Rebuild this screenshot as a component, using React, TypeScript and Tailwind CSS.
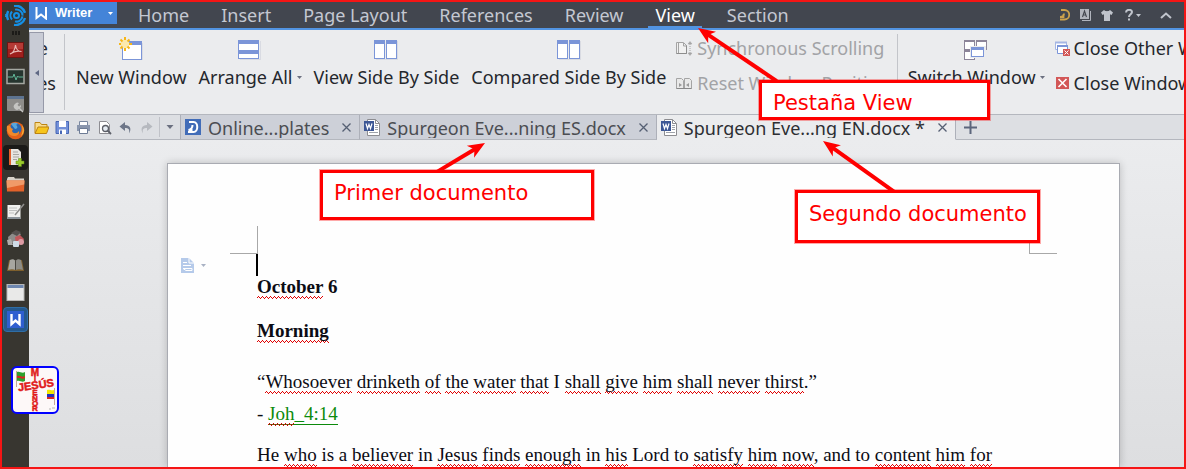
import type { ReactNode } from "react";

const squiggle =
  "pb-[2px] bg-no-repeat bg-[repeating-linear-gradient(90deg,transparent_0_1px,#e00000_1px_2px,transparent_2px_4px),repeating-linear-gradient(90deg,#e00000_0_1px,transparent_1px_2px),repeating-linear-gradient(90deg,transparent_0_3px,#e00000_3px_4px)] bg-[length:100%_1px] bg-[position:0_calc(100%_-_2px),0_calc(100%_-_1px),0_100%]";

function Spell({ children }: { children: ReactNode }) {
  return <span className={squiggle}>{children}</span>;
}

function Checked({ text }: { text: string }) {
  // Words wrapped in [brackets] are flagged by the spelling checker.
  return (
    <>
      {text.split(/(\[[^\]]+\])/).map((part, i) =>
        part.startsWith("[") ? <Spell key={i}>{part.slice(1, -1)}</Spell> : part,
      )}
    </>
  );
}

function Caret({ className }: { className: string }) {
  return (
    <svg viewBox="0 0 7 4" className={className} fill="currentColor">
      <path d="M0 0h7L3.5 4z" />
    </svg>
  );
}

/* ---------- Launcher ---------- */

const launcher: { name: string; tile?: string; icon: ReactNode }[] = [
  {
    name: "PDF reader",
    icon: (
      <>
        <rect x="1.5" y="2.5" width="16" height="15" fill="#9e1f1d" stroke="#6c1513" />
        <rect x="2" y="3" width="15" height="6" fill="#b53a35" />
        <path d="M4 14c3-1 5-5 5.500-9 .5 4 3 6.500 6 6.500-4-1-8 0-11.500 2.500z" fill="none" stroke="#e8b9b5" strokeWidth="1.100" />
      </>
    ),
  },
  {
    name: "System monitor",
    icon: (
      <>
        <rect x="1" y="2.500" width="17" height="14" fill="#26352f" stroke="#a5a8a2" strokeWidth="1.500" />
        <path d="M2 10h5l1-3 2 6 1.500-4 1 1H17" fill="none" stroke="#5fb597" />
      </>
    ),
  },
  {
    name: "System tools",
    icon: (
      <>
        <rect x="1" y="2" width="17" height="15" rx="1" fill="#8d8c89" />
        <rect x="1" y="2" width="17" height="3" fill="#5d7390" />
        <path d="M9 10a3 3 0 0 1 4-1l-1.500 2 1.500 1.500L15 11a3 3 0 0 1-1 3l3.500 3.500-1 1L13 15a3 3 0 0 1-4-5z" fill="#c5c5c2" />
      </>
    ),
  },
  {
    name: "Firefox",
    icon: (
      <>
        <circle cx="9.500" cy="9.500" r="8.800" fill="#e2611a" />
        <circle cx="9.500" cy="8" r="6" fill="#2b67b0" />
        <path d="M5 3c3-2 6-1 7 0-2 0-2 1-1 2s0 3-2 3z" fill="#58a6dc" />
        <path d="M1 5c2-1 4 0 4 2l2 1-1 2c1 3 5 3 7 0 1 3-2 5-5 5-5 0-8-5-7-10z" fill="#f0892a" />
        <path d="M16 4c2 3 3 8-1 11 2-4 2-7 1-11z" fill="#f8c53a" />
      </>
    ),
  },
  {
    name: "New document",
    tile: "bg-[#1b1a18] rounded-sm",
    icon: (
      <>
        <path d="M3 1h9l3 3v13H3z" fill="#e8e6e2" />
        <path d="M3 1h2v16H3z" fill="#e0622d" />
        <path d="M7 4h5M7 6.500h6M7 9h6M7 11.500h4" stroke="#a9a7a3" />
        <path d="M12.500 10.500h3v2.500H18v3h-2.500v2.500h-3V16H10v-3h2.500z" fill="#9ccb2c" stroke="#5e8a12" strokeWidth=".5" />
      </>
    ),
  },
  {
    name: "Files",
    icon: (
      <>
        <path d="M1 4l1-2h6l1 1.500h9V10H1z" fill="#d8d2c8" />
        <path d="M.5 5.500h18L18 16.500H1z" fill="#e2622a" />
        <path d="M.5 5.500h18l-.3 4L1 13z" fill="#f09a68" />
      </>
    ),
  },
  {
    name: "Text editor",
    icon: (
      <>
        <rect x="1.500" y="3" width="13" height="14" fill="#f0f0ee" />
        <path d="M3 6h8M3 8.500h8M3 11h5" stroke="#bfc0bf" />
        <rect x="1.500" y="15" width="13" height="2" fill="#8a9298" />
        <path d="M18 2l-9 11" stroke="#8e8e8c" strokeWidth="1.500" />
      </>
    ),
  },
  {
    name: "Packages",
    icon: (
      <>
        <path d="M2 8l7-6 6 3-5 7-7 4z" fill="#8e8c8b" />
        <path d="M5 4l5-3 5 2-4 4z" fill="#54504f" />
        <path d="M9 8l5-2 4 4-2 5-6 1z" fill="#c2575b" />
        <circle cx="15" cy="13" r="3" fill="#dd9ba4" />
        <rect x="7" y="12" width="6" height="6" rx="1" fill="#cfdbe6" />
        <path d="M1 11l4-1 2 6-5 0z" fill="#adacaa" />
      </>
    ),
  },
  {
    name: "Dictionary",
    icon: (
      <>
        <path d="M1 15L3 4l6 1 1 0 6-1 2 11-8 0z" fill="#7e5f2c" />
        <path d="M2 14L4 4c2-1 4-1 5.500 1v9c-2-1-5-1-7.500 0z" fill="#a7a6a0" />
        <path d="M17 14L15 4c-2-1-4-1-5.500 1v9c2-1 5-1 7.500 0z" fill="#8d8c86" />
        <path d="M9.500 5v9" stroke="#4a4842" />
      </>
    ),
  },
  {
    name: "Window",
    icon: (
      <>
        <rect x="1" y="1.500" width="17" height="16" fill="#e9e9e8" stroke="#b7b7b5" />
        <rect x="1.500" y="2" width="16" height="3" fill="#6e87b0" />
      </>
    ),
  },
  {
    name: "Writer",
    tile: "bg-[#25588c] border border-[#2f6ea6] rounded-sm",
    icon: (
      <>
        <rect x="1" y="1" width="17" height="17" fill="#2f5fd0" />
        <path d="M5.500 4v10l4-3.500 4 3.500V4" fill="none" stroke="#fff" strokeWidth="2.400" />
      </>
    ),
  },
];

function Launcher() {
  return (
    <aside className="flex w-[27px] shrink-0 flex-col items-center bg-[#383630]">
      <button aria-label="Dash" className="flex h-[27px] items-center">
        <svg viewBox="0 0 21 21" className="size-[21px]" fill="none" stroke="#1590e6" strokeWidth="2">
          <circle cx="11.500" cy="10.500" r="2.500" />
          <path d="M7 6.500a6 6 0 0 0 0 8M10 4.600a6 6 0 0 1 7.500 6M10 16.400a6 6 0 0 0 7.500-5" />
          <path d="M9 .8a10 10 0 0 1 11 7M9 20a10 10 0 0 0 11-7M3.200 6a10 10 0 0 0 0 9" strokeWidth="2.400" />
          <circle cx="1" cy="10.500" r=".6" />
        </svg>
      </button>
      <div className="flex h-[7px] items-center gap-px">
        <i className="h-1 w-[2px] bg-[#1c1b18]" />
        <i className="h-1 w-[2px] bg-[#1c1b18]" />
        <i className="h-1 w-[2px] bg-[#1c1b18]" />
      </div>
      {launcher.map((app) => (
        <button key={app.name} aria-label={app.name} className="flex h-[27px] w-full items-center justify-center">
          <span className={`flex size-[25px] items-center justify-center ${app.tile ?? ""}`}>
            <svg viewBox="0 0 19 19" className="size-[19px] shrink-0">{app.icon}</svg>
          </span>
        </button>
      ))}
    </aside>
  );
}

/* ---------- Menu bar ---------- */

const menus = ["Home", "Insert", "Page Layout", "References", "Review", "View", "Section"];

function MenuBar() {
  return (
    <header className="flex h-7 shrink-0 items-start border-b-2 border-[#5294e2] bg-[#42464f]">
      <button className="flex h-[22px] w-[88px] shrink-0 items-center bg-[#4484d8] pl-[6px] font-['Liberation_Sans'] text-[13px] font-bold text-white">
        <svg viewBox="0 0 13 13" className="size-[13px]" fill="none" stroke="#fff" strokeWidth="2">
          <path d="M1.500 0v11L6 7.500 11 11.500V0" />
        </svg>
        <span className="ml-[7px] flex-1 text-left">Writer</span>
        <Caret className="mr-[4px] h-[3px] w-[5px]" />
      </button>
      <nav className="ml-[14px] flex gap-[18px]">
        {menus.map((m) => (
          <button
            key={m}
            className={`h-[26px] border-y-2 border-t-transparent px-[7px] text-[18px] leading-[22px] whitespace-nowrap ${
              m === "View" ? "border-b-[#5294e2] text-white" : "border-b-transparent text-[#c4c8d2]"
            }`}
          >
            {m}
          </button>
        ))}
      </nav>
      <div className="ml-auto flex h-[26px] items-center pr-3 text-[#c0c4cc]">
        <button aria-label="Docer" className="mr-[10px]">
          <svg viewBox="0 0 11 12" className="h-3 w-[11px]" fill="none" stroke="#cda24c" strokeWidth="1.800">
            <path d="M2 1h3.500a4.500 4.500 0 0 1 0 9.500H1M5 4.500c0 2-1 3.500-4 3.500h3.500V5" />
          </svg>
        </button>
        <button aria-label="Fonts" className="mr-[10px]">
          <svg viewBox="0 0 11 12" className="h-3 w-[11px]">
            <path d="M0 0h9v10H0z" fill="#b0b4bd" />
            <path d="M10.500 2v9.500H2" fill="none" stroke="#b0b4bd" />
            <path d="M2.500 8l2-6 2 6M3 6h3" fill="none" stroke="#42464f" strokeWidth="1.100" />
          </svg>
        </button>
        <button aria-label="Skins" className="mr-3">
          <svg viewBox="0 0 12 11" className="h-[11px] w-3" fill="currentColor">
            <path d="M3 0c1.500 1.600 4.500 1.600 6 0l3 2.500-1.500 2.500-1.500-.8V11H3V4.200L1.500 5 0 2.500z" />
          </svg>
        </button>
        <button aria-label="Help" className="mr-[19px] flex items-center gap-[3px]">
          <svg viewBox="0 0 8 12" className="h-3 w-2" fill="none" stroke="currentColor" strokeWidth="2">
            <path d="M1 3.500C1 0 7 0 7 3c0 2-3 2.500-3 5M4 9.500v2" />
          </svg>
          <Caret className="h-[3px] w-[5px]" />
        </button>
        <button aria-label="Collapse ribbon">
          <svg viewBox="0 0 12 7" className="h-[7px] w-3" fill="none" stroke="currentColor" strokeWidth="2">
            <path d="M1 6l5-4.500L11 6" />
          </svg>
        </button>
      </div>
    </header>
  );
}

/* ---------- Ribbon ---------- */

const blue = "#7b95d8";

function SideBySideIcon() {
  return (
    <svg viewBox="0 0 24 24" className="size-6" shapeRendering="crispEdges">
      <path d="M2 23h22V4h-1v18H2z" fill="#d9dbe2" />
      <path d="M.5 3.500h10v18H.5zM12.500 3.500h10v18h-10z" fill="#fff" stroke={blue} />
      <path d="M0 3h11v4H0zM12 3h11v4H12z" fill={blue} />
    </svg>
  );
}

function BigButton({ label, icon, menu }: { label: string; icon: ReactNode; menu?: boolean }) {
  return (
    <button className="flex shrink-0 flex-col items-center gap-1 px-[6px] pt-[7px]">
      {icon}
      <span className="flex items-center gap-1 leading-6 whitespace-nowrap">
        {label}
        {menu && <Caret className="h-[3px] w-[5px] text-[#6b7080]" />}
      </span>
    </button>
  );
}

function SmallButton({ label, icon, disabled }: { label: string; icon: ReactNode; disabled?: boolean }) {
  return (
    <button disabled={disabled} className="flex items-center gap-1 leading-6 whitespace-nowrap disabled:text-[#a2a3a6]">
      {icon}
      {label}
    </button>
  );
}

function Ribbon() {
  return (
    <section className="flex h-[85px] shrink-0 items-start overflow-hidden border-b border-[#b4b7be] bg-[#ebecee] text-[18px] text-[#24272c]">
      <button aria-label="Scroll ribbon left" className="mt-[2px] flex h-[81px] w-[15px] shrink-0 items-center justify-center border border-[#9699a8] bg-[#c9ccd6]">
        <svg viewBox="0 0 4 6" className="h-[6px] w-1" fill="#5f6884"><path d="M4 0v6L0 3z" /></svg>
      </button>
      <div className="flex w-5 shrink-0 flex-col gap-[11px] pt-[6px] leading-6">
        <span className="flex w-1 justify-end overflow-hidden">e</span>
        <span className="flex w-3 justify-end overflow-hidden">es</span>
      </div>
      <i className="mt-1 h-[76px] w-px shrink-0 bg-[#c3c5ca]" />
      <div className="flex shrink-0 pl-[5px]">
        <BigButton
          label="New Window"
          icon={
            <svg viewBox="0 0 24 24" className="size-6">
              <path d="M5 23h19V6h-1v16H5z" fill="#d9dbe2" />
              <rect x="3.500" y="5.500" width="19" height="17" fill="#fff" stroke={blue} />
              <path d="M3 4h20v4H3z" fill={blue} />
              <circle cx="6" cy="7" r="4.500" fill="#fbe9ad" />
              <path d="M6 0v3M6 11v3M0 7h2M10 7h3M1.500 2.500l2 2M8.500 9.500l2 2M10.500 2.500l-2 2M3.500 9.500l-2 2" stroke="#f6b619" strokeWidth="2" />
            </svg>
          }
        />
        <BigButton
          label="Arrange All"
          menu
          icon={
            <svg viewBox="0 0 24 24" className="size-6" shapeRendering="crispEdges">
              <path d="M2 23h21V4h-1v18H2z" fill="#d9dbe2" />
              <path d="M.5 3.500h20v18H.5z" fill="#fff" stroke={blue} />
              <path d="M0 3h21v4H0zM0 13h21v4H0z" fill={blue} />
            </svg>
          }
        />
        <BigButton label="View Side By Side" icon={<SideBySideIcon />} />
        <BigButton label="Compared Side By Side" icon={<SideBySideIcon />} />
      </div>
      <div className="flex shrink-0 flex-col items-start gap-[11px] pt-[6px] pr-[7px] pl-1">
        <SmallButton
          disabled
          label="Synchronous Scrolling"
          icon={
            <svg viewBox="0 0 17 17" className="size-[17px]" fill="none" stroke="#a4a4a4">
              <path d="M.5 2.500h7l3 3v8H.5zM2.500 3v10M7.500 3v3h3" fill="#f1f1f1" />
              <path d="M.5 13.500h10v-8" stroke="#8d8d8d" />
              <path d="M14 4v10" strokeDasharray="1 1" />
              <path d="M12 4l2-2.500L16 4zM12 13l2 2.500 2-2.500z" fill="#a4a4a4" strokeWidth=".5" />
            </svg>
          }
        />
        <SmallButton
          disabled
          label="Reset Window Position"
          icon={
            <svg viewBox="0 0 17 17" className="size-[17px]" fill="#e9e9e9" stroke="#a4a4a4">
              <path d="M.5 3.500h5l2 2v8h-7zM8.500 3.500h5l2 2v8h-7z" />
              <path d="M3 8v4l3-2zM13 8v4l-3-2z" fill="#999" stroke="none" />
              <path d="M.5 13.500h15" stroke="#888" />
            </svg>
          }
        />
      </div>
      <i className="mt-1 h-[76px] w-px shrink-0 bg-[#c3c5ca]" />
      <div className="shrink-0 pl-1">
        <BigButton
          label="Switch Window"
          menu
          icon={
            <svg viewBox="0 0 24 24" className="size-6" shapeRendering="crispEdges" fill="#fff" stroke="#8c8599">
              <path d="M.5 3.500h10v9H.5zM12.500 3.500h10v9h-10zM.5 13.500h10v9H.5z" />
              <path d="M0 4.500h11M12 4.500h11M0 14.500h11" />
              <path d="M6 9h16v12H6z" fill="#ebecee" stroke="none" />
              <path d="M7.500 10.500h12v9h-12z" stroke={blue} />
              <path d="M7 11.500h13" stroke={blue} strokeWidth="2" />
            </svg>
          }
        />
      </div>
      <div className="flex shrink-0 flex-col items-start gap-[11px] pt-[6px] pl-1">
        <SmallButton
          label="Close Other Windows"
          icon={
            <svg viewBox="0 0 15 15" className="size-[15px]" fill="#fff" stroke={blue}>
              <path d="M.5 1.500h11v7H.5z" stroke="#a5b6e4" />
              <path d="M0 1.500h12" strokeWidth="2" stroke="#a5b6e4" />
              <path d="M2.500 4.500h10v8h-10z" />
              <path d="M2 5h11" strokeWidth="2" />
              <path d="M8 8h7v7H8z" fill="#d25757" stroke="none" />
              <path d="M9.500 9.500l4 4M13.500 9.500l-4 4" stroke="#fff" />
            </svg>
          }
        />
        <SmallButton
          label="Close Window"
          icon={
            <svg viewBox="0 0 15 15" className="size-[15px]">
              <path d="M1 1h13v12H1z" fill="#d25757" />
              <path d="M3.500 3l8 8M11.500 3l-8 8" stroke="#fff" strokeWidth="1.600" />
            </svg>
          }
        />
      </div>
    </section>
  );
}

/* ---------- Quick access and document tabs ---------- */

const quick: { name: string; icon: ReactNode }[] = [
  {
    name: "Open",
    icon: (
      <>
        <path d="M1 13V2.500h5l1.500 2H13V7" fill="#f8dc8d" stroke="#bd8413" />
        <path d="M1 13.500L4 7h11l-2.500 6.500z" fill="#f6c51d" stroke="#bd8413" />
      </>
    ),
  },
  {
    name: "Save",
    icon: (
      <>
        <path d="M1 1.500h12.500v12H1z" fill="#7390d8" stroke="#4767b5" />
        <path d="M4 1h7v6H4z" fill="#fff" />
        <path d="M4 9.500h7V14H4z" fill="#fff" />
        <path d="M5 10.500h2V14H5z" fill="#4767b5" />
      </>
    ),
  },
  {
    name: "Print",
    icon: (
      <>
        <path d="M3.500 1.500h8v4h-8z" fill="#fff" stroke="#7a88a0" />
        <path d="M1 5h13v6H1z" fill="#8a96ad" />
        <path d="M3.500 8.500h8v5h-8z" fill="#fff" stroke="#6d7b95" />
      </>
    ),
  },
  {
    name: "Print preview",
    icon: (
      <>
        <path d="M2.500 1.500h7l3 3v9h-10z" fill="#fff" stroke="#8d8d92" />
        <circle cx="8.500" cy="8.500" r="3" fill="#e7edf4" stroke="#5c5f68" strokeWidth="1.300" />
        <path d="M10.500 10.500l3.500 3.500" stroke="#5c5f68" strokeWidth="1.800" />
      </>
    ),
  },
  {
    name: "Undo",
    icon: <path d="M7 2L1.500 6.500 7 11V8c3 0 5 .5 4 5.500C14 9 12 5 7 5z" fill="#6d7688" />,
  },
  {
    name: "Redo",
    icon: <path d="M8 2l5.500 4.500L8 11V8c-3 0-5 .5-4 5.500C1 9 3 5 8 5z" fill="#b6b9bf" />,
  },
];

function CloseIcon() {
  return (
    <svg viewBox="0 0 11 11" className="size-[11px]" stroke="#555f73" strokeWidth="1.300">
      <path d="M1.500 1.500l8 8M9.500 1.500l-8 8" />
    </svg>
  );
}

function WordIcon() {
  return (
    <svg viewBox="0 0 17 17" className="size-[17px]">
      <path d="M3.500.5h8l4 4v12h-12z" fill="#fff" stroke="#8c8c90" />
      <path d="M11.500.5v4h4" fill="none" stroke="#8c8c90" />
      <path d="M11 6.500h3M11 8.500h3M11 10.500h3M5 13.500h9" stroke="#9fa3aa" />
      <path d="M0 2h10v10H0z" fill="#3c5795" />
      <path d="M2 4.500l1.500 5L5 5.500l1.500 4L8 4.500" fill="none" stroke="#fff" strokeWidth="1.200" />
    </svg>
  );
}

function DocTab({ label, icon, active }: { label: string; icon: ReactNode; active?: boolean }) {
  return (
    <div
      className={`flex shrink-0 items-center border-r border-b border-r-[#adb0b9] pr-[7px] pl-1 ${
        active ? "border-b-[#ebecee] bg-[#ebecee] text-[#2d2f33]" : "border-b-[#b4b7be] bg-[#cdd0d8] text-[#4b4d52]"
      }`}
    >
      <button className="flex items-center gap-[6px]">
        {icon}
        <span className="h-[22px] overflow-hidden leading-6 whitespace-nowrap">{label}</span>
      </button>
      <button aria-label={`Close ${label}`} className="ml-3">
        <CloseIcon />
      </button>
    </div>
  );
}

function TabBar() {
  return (
    <div className="flex h-[25px] shrink-0 items-stretch overflow-hidden bg-[#dddfe3] text-[18px]">
      <div className="flex shrink-0 items-center border-r border-b border-r-[#adb0b9] border-b-[#b4b7be] pl-[2px]">
        {quick.map((q) => (
          <button key={q.name} aria-label={q.name} className="flex w-[21px] justify-center">
            <svg viewBox="0 0 15 15" className="size-[15px]">{q.icon}</svg>
          </button>
        ))}
        <i className="ml-[2px] h-5 w-px bg-[#c0c2c8]" />
        <button aria-label="Customise toolbar" className="flex w-5 justify-center">
          <Caret className="h-1 w-2 text-[#6b7080]" />
        </button>
      </div>
      <DocTab
        label="Online...plates"
        icon={
          <svg viewBox="0 0 17 17" className="size-[17px]">
            <path d="M0 0h16v16H0z" fill="#416cb8" />
            <path d="M4 3h4.500c5 0 5 10 0 10H3M7.500 6c0 3-1 4.500-4 5h4" fill="none" stroke="#fff" strokeWidth="2" />
          </svg>
        }
      />
      <DocTab label="Spurgeon Eve...ning ES.docx" icon={<WordIcon />} />
      <DocTab label="Spurgeon Eve...ng EN.docx *" icon={<WordIcon />} active />
      <div className="flex flex-1 items-center border-b border-[#b4b7be] pl-2">
        <button aria-label="New tab">
          <svg viewBox="0 0 13 13" className="size-[13px]" stroke="#5c667c" strokeWidth="2">
            <path d="M6.500 0v13M0 6.500h13" />
          </svg>
        </button>
      </div>
    </div>
  );
}

/* ---------- Document ---------- */

function Page() {
  return (
    <main className="min-h-0 flex-1 overflow-hidden bg-linear-to-b from-[#ebecee] to-[#dddee0] pt-[23px] pr-16 pl-[138px]">
      <article className="h-full border border-b-0 border-[#a9abb2] bg-[#fefefe] font-['Liberation_Serif'] text-[19px] leading-[22px] text-[#0c0c14] shadow-[0_0_8px_rgba(0,0,0,0.2)]">
        <div className="flex justify-between px-[62px] pt-[62px]">
          <i className="size-7 border-r border-b border-[#a8a8a8]" />
          <i className="size-7 border-b border-l border-[#a8a8a8]" />
        </div>
        <div className="flex">
          <button aria-label="Paste options" className="flex w-[88px] items-center gap-[7px] pl-[13px]">
            <svg viewBox="0 0 13 15" className="h-[15px] w-[13px]">
              <path d="M0 0h8l5 5v10H0z" fill="#b5caea" />
              <path d="M8 0v5h5M2 4.500h4M2 7.500h8M2 10.500h9v2H5z" fill="none" stroke="#fff" />
            </svg>
            <Caret className="h-[3px] w-[5px] text-[#a9b2c4]" />
          </button>
          <i className="h-[22px] w-[2px] bg-black" />
        </div>
        <div className="px-[89px] whitespace-nowrap">
          <h1 className="font-bold"><Checked text="[October] 6" /></h1>
          <h2 className="mt-[22px] font-bold"><Checked text="[Morning]" /></h2>
          <p className="mt-[29px]">
            <Checked text="“[Whosoever] [drinketh] [of] [the] [water] [that] I [shall] [give] [him] [shall] [never] [thirst].”" />
          </p>
          <p className="mt-[10px]">
            - <a href="#joh-4-14" className="border-b border-[#0c8a0c] text-[#0c8a0c]"><Spell>Joh</Spell>_4:14</a>
          </p>
          <p className="mt-[19px]">
            <Checked text="He [who] is a [believer] in [Jesus] [finds] [enough] in [his] Lord to [satisfy] [him] [now], and to [content] [him] [for]" />
          </p>
        </div>
      </article>
    </main>
  );
}

/* ---------- Annotations drawn over the window ---------- */

function Arrow({ x, y, angle, length }: { x: number; y: number; angle: number; length: number }) {
  return (
    <g transform={`translate(${x} ${y}) rotate(${angle})`} fill="#f00" stroke="none">
      <path d="M0 0L17-7 13-1V1L17 7z" />
      <path d={`M12-2H${length}V2H12z`} />
    </g>
  );
}

const callout =
  "absolute border-[3px] border-[#f00] bg-white pl-[11px] font-['DejaVu_Sans'] text-[21px] leading-6 whitespace-nowrap text-[#f00] outline outline-[#ff000055]";

function Annotations() {
  return (
    <div className="pointer-events-none absolute inset-0">
      <svg className="absolute inset-0 size-full">
        <Arrow x={696} y={26} angle={34} length={95} />
        <Arrow x={483} y={141} angle={149} length={56} />
        <Arrow x={821} y={139} angle={35.500} length={88} />
      </svg>
      <div className={`${callout} top-[78px] left-[757px] h-[40px] w-[231px] pt-[8px]`}>Pestaña View</div>
      <div className={`${callout} top-[168px] left-[318px] h-[50px] w-[274px] pt-[8px]`}>Primer documento</div>
      <div className={`${callout} top-[188px] left-[793px] h-[53px] w-[245px] pt-[9px]`}>Segundo documento</div>
      <div className="absolute top-[364px] left-[9px] size-12 rounded-md border-2 border-[#00f] bg-[#fdf8f8]">
        <svg viewBox="0 0 44 44" className="size-11 font-['Liberation_Sans'] font-bold" fill="#e01b1b" strokeWidth=".5">
          <path d="M3.500 3v16" stroke="#8b5a3c" />
          <path d="M4 4c3-1 5 2 8 0v9c-3 2-5-1-8 0z" fill="#2ea02e" />
          <path d="M4 8c3-1 5 2 8 0v2c-3 2-5-1-8 0z" fill="#d22" />
          <path d="M41.500 20v17" stroke="#8b5a3c" />
          <path d="M34 22c3-1 4 1 7 0v4h-7z" fill="#f3e600" />
          <path d="M34 26h7v3h-7z" fill="#2430c0" />
          <path d="M34 29h7v2h-7z" fill="#d22" />
          <g fontSize="8" textAnchor="middle" stroke="#e01b1b">
            <text x="22" y="8" fontSize="10">M</text>
            <text x="22" y="13" fontSize="7">I</text>
            <text x="22" y="27">E</text>
            <text x="22" y="33">Ñ</text>
            <text x="22" y="38">O</text>
            <text x="22" y="43">R</text>
            <text x="23" y="21" fontSize="11" transform="rotate(-8 22 18)">JESÚS</text>
          </g>
          <path d="M36 41h2M39 40h3" stroke="#999" strokeWidth=".7" />
        </svg>
      </div>
    </div>
  );
}

export default function App() {
  return (
    <div className="relative flex h-screen overflow-hidden border-2 border-[#f51515] font-['Noto_Sans',sans-serif]">
      <Launcher />
      <div className="flex min-w-0 flex-1 flex-col">
        <MenuBar />
        <Ribbon />
        <TabBar />
        <Page />
      </div>
      <Annotations />
    </div>
  );
}
